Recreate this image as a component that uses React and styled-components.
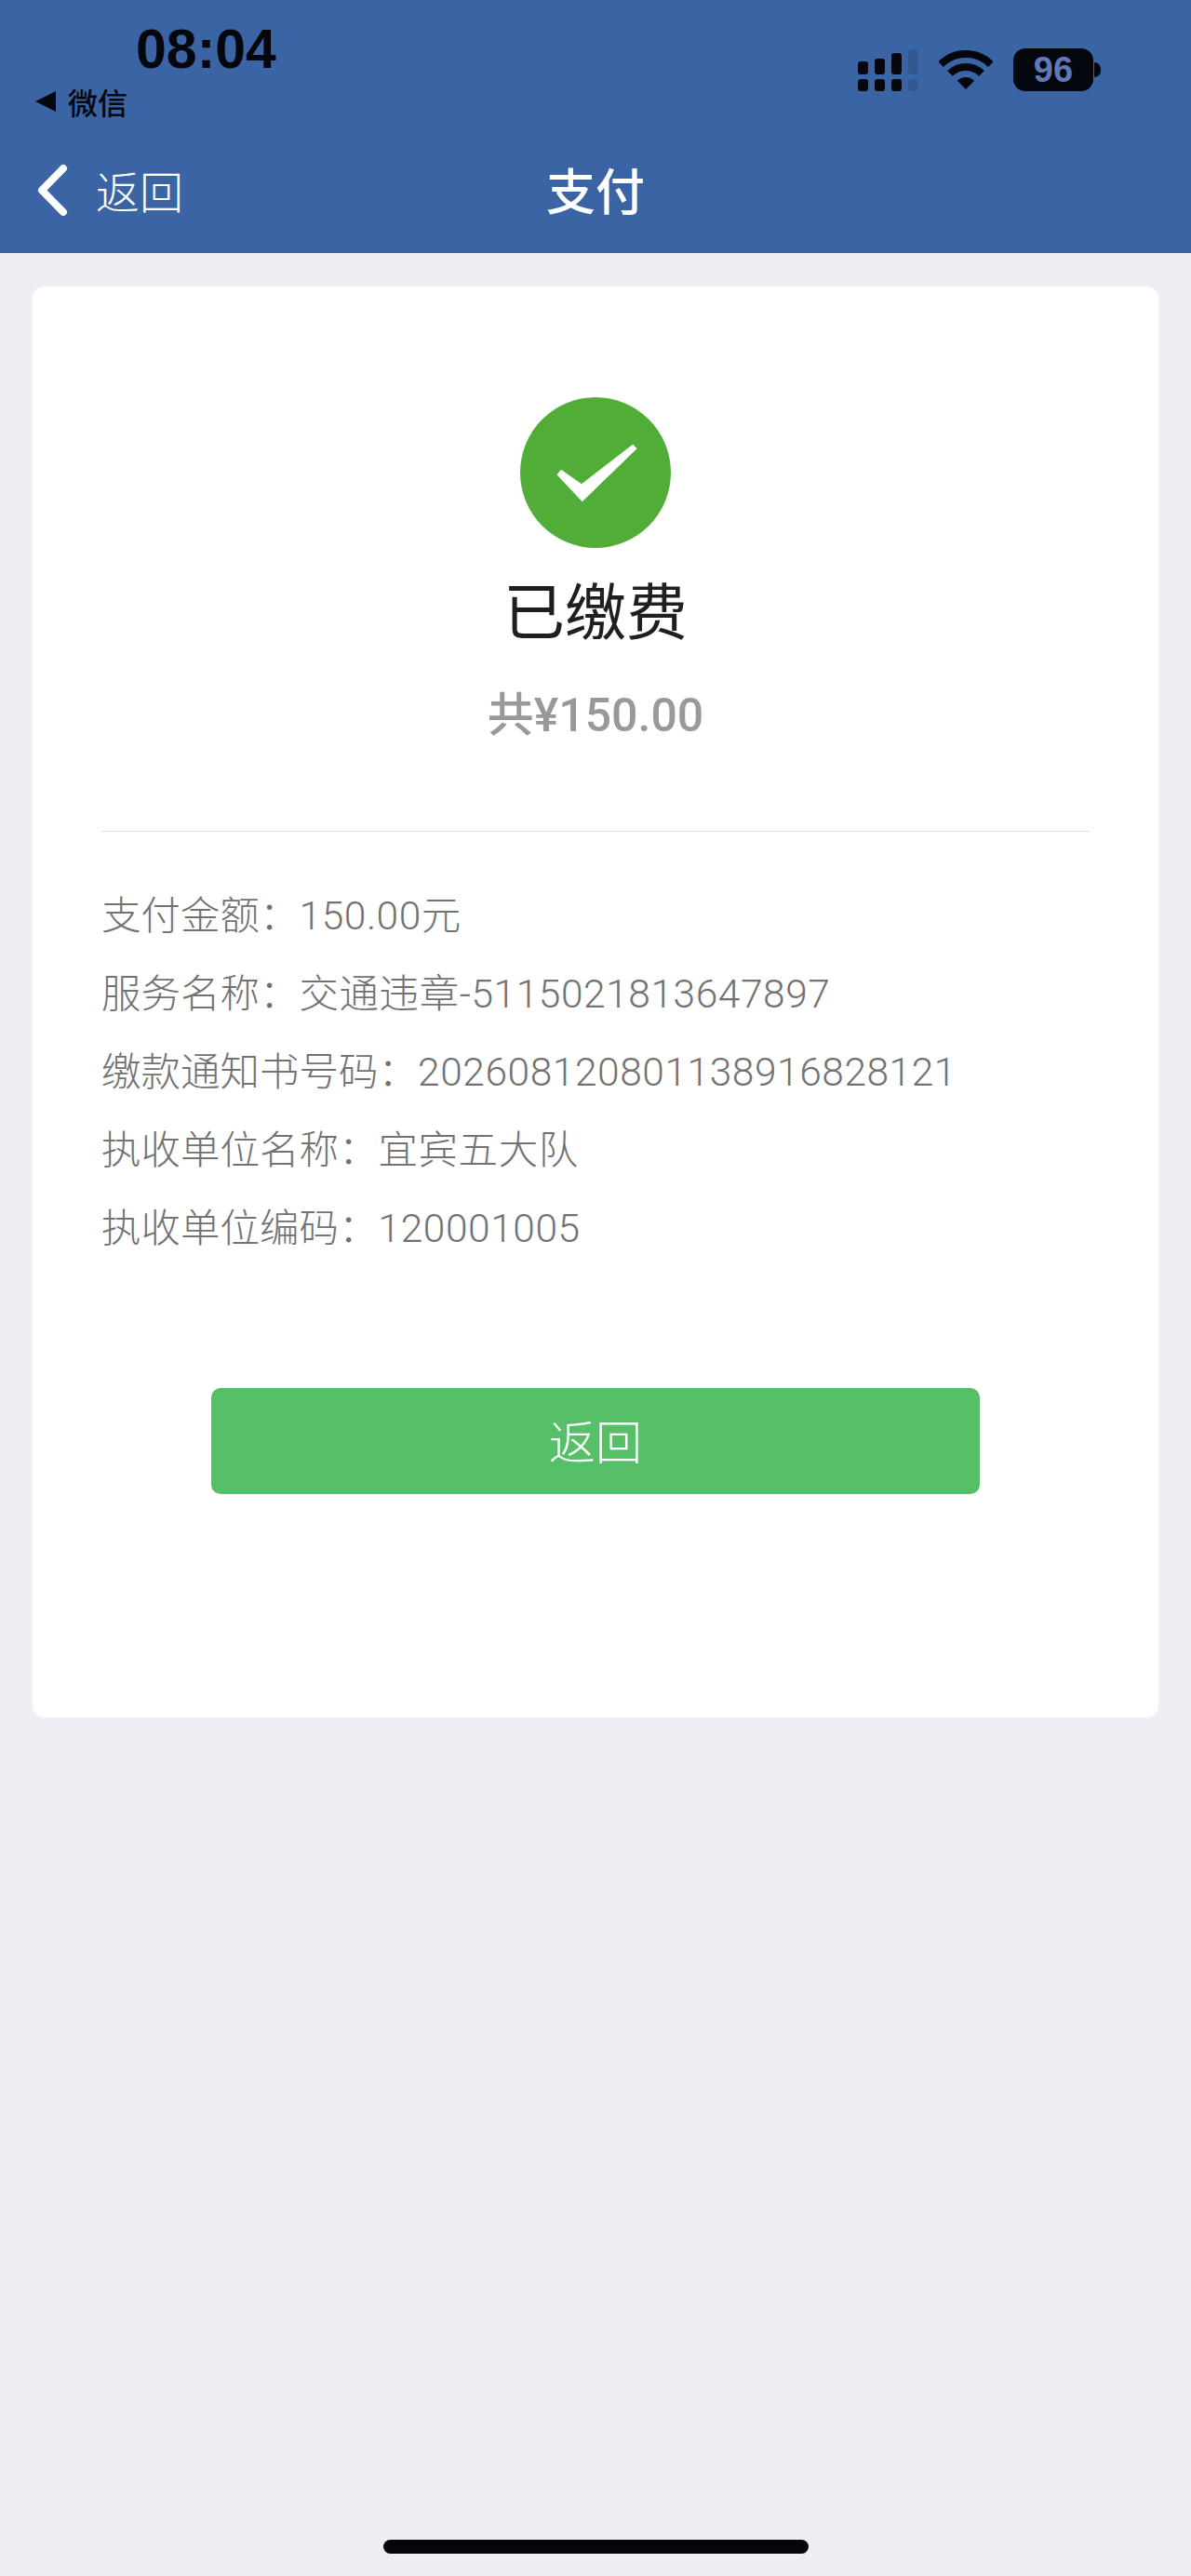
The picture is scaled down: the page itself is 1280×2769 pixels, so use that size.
import React from 'react'
import styled, {createGlobalStyle} from 'styled-components'

const FONT = `Roboto, "Noto Sans CJK SC", sans-serif`

const GlobalStyle = createGlobalStyle`
  html, body {
    margin: 0;
    padding: 0;
    background: #eeeef4;
  }
  * {
    box-sizing: border-box;
  }
`

const Page = styled.div`
  display: flex;
  flex-direction: column;
  width: 1280px;
  height: 2769px;
  overflow: hidden;
  background: #eeeef4;
  font-family: ${FONT};
`

const Header = styled.header`
  height: 272px;
  flex-shrink: 0;
  background: #3a64a4;
`

const StatusBar = styled.div`
  display: flex;
  justify-content: space-between;
  height: 166px;
  padding: 24px 97px 0 38px;
`

const StatusLeft = styled.div`
  display: flex;
  flex-direction: column;
`

const Time = styled.div`
  margin-left: 108px;
  color: #05070f;
  font-family: "Liberation Sans", sans-serif;
  font-size: 59px;
  font-weight: 700;
  line-height: 58px;
`

const AppLink = styled.div`
  display: flex;
  align-items: center;
  gap: 13px;
  margin-top: 6px;
  color: #05070f;
  font-family: "Noto Sans CJK SC", sans-serif;
  font-size: 32px;
  font-weight: 500;
  line-height: 42px;
`

const Triangle = styled.span`
  width: 0;
  height: 0;
  border-top: 11px solid transparent;
  border-bottom: 11px solid transparent;
  border-right: 22px solid #05070f;
`

const StatusIcons = styled.div`
  display: flex;
  align-items: center;
  align-self: flex-start;
  height: 46px;
  margin-top: 28px;
`

const Wifi = styled.svg`
  margin-left: 22px;
`

const Battery = styled.div`
  display: flex;
  align-items: center;
  margin-left: 22px;
`

const BatteryBody = styled.div`
  width: 86px;
  height: 46px;
  border-radius: 13px;
  background: #05070f;
  color: #5f78b6;
  font-family: "Liberation Sans", sans-serif;
  font-size: 38px;
  font-weight: 700;
  line-height: 46px;
  text-align: center;
`

const BatteryNub = styled.span`
  width: 7px;
  height: 16px;
  margin-left: 1px;
  border-radius: 0 8px 8px 0;
  background: #05070f;
`

const NavBar = styled.nav`
  display: grid;
  grid-template-columns: 1fr auto 1fr;
  align-items: center;
  height: 76px;
  padding: 0 40px;
`

const BackLink = styled.div`
  display: flex;
  align-items: center;
  gap: 30px;
  color: #fff;
  font-family: "Noto Sans CJK SC", sans-serif;
  font-size: 47px;
  font-weight: 300;
  line-height: 76px;
`

const NavTitle = styled.div`
  margin-top: -2px;
  color: #fff;
  font-family: "Noto Sans CJK SC", sans-serif;
  font-size: 53px;
  font-weight: 500;
  line-height: 76px;
`

const Card = styled.main`
  display: flex;
  flex-direction: column;
  align-items: center;
  margin: 36px 35px 0;
  padding: 119px 0 240px;
  border-radius: 12px;
  background: #fff;
`

const SuccessIcon = styled.svg`
  display: block;
`

const Title = styled.h1`
  margin: 24px 0 0;
  color: #1f1f1f;
  font-family: "Noto Sans CJK SC", sans-serif;
  font-size: 66px;
  font-weight: 400;
  line-height: 80px;
`

const Amount = styled.div`
  margin-top: 46px;
  color: #999;
  font-size: 50px;
  font-weight: 500;
  line-height: 60px;
`

const Divider = styled.hr`
  align-self: stretch;
  height: 1px;
  margin: 94px 74px 0;
  border: 0;
  background: #e2e2e2;
`

const Details = styled.dl`
  align-self: stretch;
  margin: 49px 0 0;
  padding-left: 74px;
`

const Row = styled.div`
  display: flex;
  height: 84px;
  align-items: center;
  color: #727272;
  font-size: 42.5px;
  font-weight: 300;
  line-height: 56px;
`

const Label = styled.dt`
  margin: 0;
`

const Value = styled.dd`
  margin: 0;
  letter-spacing: 0.55px;
`

const ReturnButton = styled.button`
  width: 826px;
  height: 114px;
  margin-top: 129px;
  padding: 0 0 4px;
  border: 0;
  border-radius: 10px;
  background: #58bf69;
  color: #fff;
  font-family: "Noto Sans CJK SC", sans-serif;
  font-size: 50px;
  font-weight: 300;
`

const HomeBar = styled.div`
  width: 457px;
  height: 15px;
  margin: auto auto 24px;
  border-radius: 8px;
  background: #05050a;
`

const details = [
  ['支付金额：', '150.00元'],
  ['服务名称：', '交通违章-5115021813647897'],
  ['缴款通知书号码：', '202608120801138916828121'],
  ['执收单位名称：', '宜宾五大队'],
  ['执收单位编码：', '120001005'],
]

const SignalIcon = () => (
  <svg width="65" height="45" viewBox="0 0 65 45">
    <g fill="#05070f">
      <rect x="0" y="13" width="11" height="14" rx="3" />
      <rect x="18" y="10" width="11" height="17" rx="3" />
      <rect x="36" y="4" width="11" height="23" rx="3" />
      <rect x="0" y="32" width="11" height="13" rx="3" />
      <rect x="18" y="32" width="11" height="13" rx="3" />
      <rect x="36" y="32" width="11" height="13" rx="3" />
    </g>
    <g fill="#05070f" opacity="0.12">
      <rect x="54" y="0" width="10" height="27" rx="3" />
      <rect x="54" y="32" width="10" height="13" rx="3" />
    </g>
  </svg>
)

const WifiIcon = () => (
  <Wifi width="58" height="42" viewBox="0 0 58 42">
    <g fill="none" stroke="#05070f" strokeWidth="8">
      <path d="M2.1 15.1A38 38 0 0 1 55.9 15.1" />
      <path d="M12 25A24 24 0 0 1 46 25" />
    </g>
    <path d="M29 42L19.8 32.8A13 13 0 0 1 38.2 32.8Z" fill="#05070f" />
  </Wifi>
)

const BackChevron = () => (
  <svg width="33" height="57" viewBox="0 0 33 57">
    <path
      d="M28 5L5 28.5L28 52"
      fill="none"
      stroke="#fff"
      strokeWidth="8"
      strokeLinecap="round"
      strokeLinejoin="round"
    />
  </svg>
)

const App = () => {
  return (
    <Page>
      <GlobalStyle />
      <Header>
        <StatusBar>
          <StatusLeft>
            <Time>08:04</Time>
            <AppLink>
              <Triangle />
              微信
            </AppLink>
          </StatusLeft>
          <StatusIcons>
            <SignalIcon />
            <WifiIcon />
            <Battery>
              <BatteryBody>96</BatteryBody>
              <BatteryNub />
            </Battery>
          </StatusIcons>
        </StatusBar>
        <NavBar>
          <BackLink>
            <BackChevron />
            返回
          </BackLink>
          <NavTitle>支付</NavTitle>
        </NavBar>
      </Header>
      <Card>
        <SuccessIcon width="162" height="162" viewBox="0 0 162 162">
          <circle cx="81" cy="81" r="81" fill="#52ac38" />
          <path
            d="M44 78.3L66 93.7L121.3 51L125 55.3L66.7 111.7L40 83.3Z"
            fill="#fff"
            stroke="#fff"
            strokeWidth="1"
            strokeLinejoin="round"
          />
        </SuccessIcon>
        <Title>已缴费</Title>
        <Amount>共¥150.00</Amount>
        <Divider />
        <Details>
          {details.map(([label, value]) => (
            <Row key={label}>
              <Label>{label}</Label>
              <Value>{value}</Value>
            </Row>
          ))}
        </Details>
        <ReturnButton>返回</ReturnButton>
      </Card>
      <HomeBar />
    </Page>
  )
}

export default App
